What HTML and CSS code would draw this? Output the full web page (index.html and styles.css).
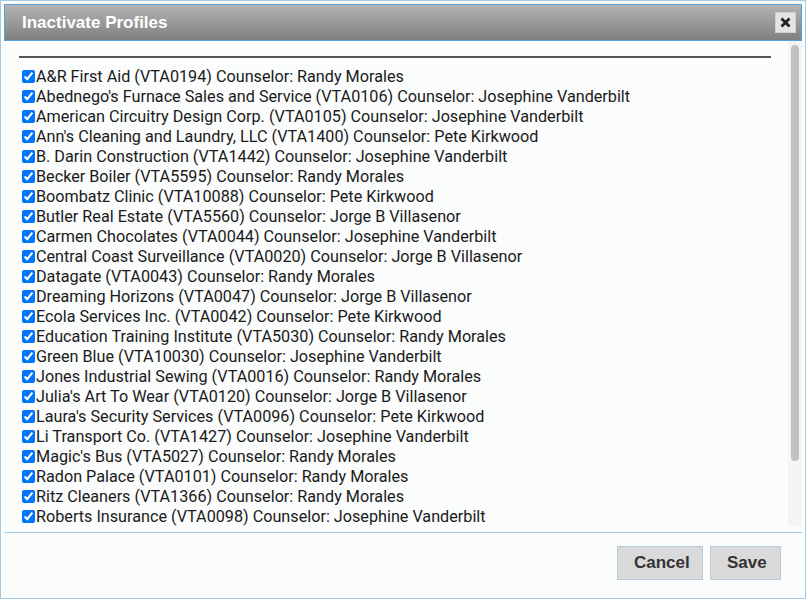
FILE: index.html
```html
<!DOCTYPE html>
<html lang="en">
<head>
  <meta charset="UTF-8">
  <title>Inactivate Profiles</title>
  <link rel="stylesheet" href="styles.css">
</head>
<body>
  <div class="dialog">
    <div class="titlebar">
      <span class="title">Inactivate Profiles</span>
      <button class="close" title="Close">
        <svg width="11" height="11" viewBox="0 0 11 11"><path d="M1.5 1.5 L9.5 9.5 M9.5 1.5 L1.5 9.5" stroke="#222" stroke-width="2.8"/></svg>
      </button>
    </div>

    <div class="content">
      <div class="list">
        <hr class="rule">
        <label class="row"><input type="checkbox" checked>A&amp;R First Aid (VTA0194) Counselor: Randy Morales</label>
        <label class="row"><input type="checkbox" checked>Abednego's Furnace Sales and Service (VTA0106) Counselor: Josephine Vanderbilt</label>
        <label class="row"><input type="checkbox" checked>American Circuitry Design Corp. (VTA0105) Counselor: Josephine Vanderbilt</label>
        <label class="row"><input type="checkbox" checked>Ann's Cleaning and Laundry, LLC (VTA1400) Counselor: Pete Kirkwood</label>
        <label class="row"><input type="checkbox" checked>B. Darin Construction (VTA1442) Counselor: Josephine Vanderbilt</label>
        <label class="row"><input type="checkbox" checked>Becker Boiler (VTA5595) Counselor: Randy Morales</label>
        <label class="row"><input type="checkbox" checked>Boombatz Clinic (VTA10088) Counselor: Pete Kirkwood</label>
        <label class="row"><input type="checkbox" checked>Butler Real Estate (VTA5560) Counselor: Jorge B Villasenor</label>
        <label class="row"><input type="checkbox" checked>Carmen Chocolates (VTA0044) Counselor: Josephine Vanderbilt</label>
        <label class="row"><input type="checkbox" checked>Central Coast Surveillance (VTA0020) Counselor: Jorge B Villasenor</label>
        <label class="row"><input type="checkbox" checked>Datagate (VTA0043) Counselor: Randy Morales</label>
        <label class="row"><input type="checkbox" checked>Dreaming Horizons (VTA0047) Counselor: Jorge B Villasenor</label>
        <label class="row"><input type="checkbox" checked>Ecola Services Inc. (VTA0042) Counselor: Pete Kirkwood</label>
        <label class="row"><input type="checkbox" checked>Education Training Institute (VTA5030) Counselor: Randy Morales</label>
        <label class="row"><input type="checkbox" checked>Green Blue (VTA10030) Counselor: Josephine Vanderbilt</label>
        <label class="row"><input type="checkbox" checked>Jones Industrial Sewing (VTA0016) Counselor: Randy Morales</label>
        <label class="row"><input type="checkbox" checked>Julia's Art To Wear (VTA0120) Counselor: Jorge B Villasenor</label>
        <label class="row"><input type="checkbox" checked>Laura's Security Services (VTA0096) Counselor: Pete Kirkwood</label>
        <label class="row"><input type="checkbox" checked>Li Transport Co. (VTA1427) Counselor: Josephine Vanderbilt</label>
        <label class="row"><input type="checkbox" checked>Magic's Bus (VTA5027) Counselor: Randy Morales</label>
        <label class="row"><input type="checkbox" checked>Radon Palace (VTA0101) Counselor: Randy Morales</label>
        <label class="row"><input type="checkbox" checked>Ritz Cleaners (VTA1366) Counselor: Randy Morales</label>
        <label class="row"><input type="checkbox" checked>Roberts Insurance (VTA0098) Counselor: Josephine Vanderbilt</label>
      </div>
      <div class="scrollbar"><div class="thumb"></div></div>
    </div>

    <div class="buttonpane">
      <button class="btn">Cancel</button>
      <button class="btn">Save</button>
    </div>
  </div>
</body>
</html>
```

FILE: styles.css
```css
html, body {
  margin: 0;
  padding: 0;
  background-color: #ffffff;
}
body {
  width: 808px;
  height: 600px;
  overflow: hidden;
}
.dialog {
  box-sizing: border-box;
  width: 806px;
  height: 599px;
  border: 1px solid #a6c9e2;
  background-color: #fbfcfc;
  padding: 3px;
  display: flex;
  flex-direction: column;
}
.titlebar {
  box-sizing: border-box;
  height: 37px;
  flex: none;
  border: 1px solid #5a9fd8;
  background: linear-gradient(#b4b4b4, #7f7f7f);
  display: flex;
  align-items: center;
  justify-content: space-between;
  padding: 0 5px 0 17px;
}
.title {
  color: #ffffff;
  font-family: "Liberation Sans", Arial, sans-serif;
  font-weight: bold;
  font-size: 17px;
}
.close {
  width: 21px;
  height: 21px;
  padding: 0;
  border: 1px solid #c5d3e0;
  background-color: #e4e4e4;
  display: flex;
  align-items: center;
  justify-content: center;
}
.content {
  flex: 1;
  display: flex;
  min-height: 0;
}
.list {
  flex: 1;
  padding: 0 17px 0 15px;
  font-family: Roboto, "Noto Sans", sans-serif;
  font-size: 16.2px;
  color: #1a1a1a;
  overflow: hidden;
}
.rule {
  margin: 15px 0 8px 0;
  border: 0;
  border-top: 2px solid #555555;
}
.row {
  display: flex;
  align-items: center;
  height: 20px;
  white-space: nowrap;
}
.row input {
  width: 13px;
  height: 13px;
  margin: 1px 1px 0 3px;
}
.scrollbar {
  width: 14px;
  margin: 0 0 6px 0;
  background-color: #f4f4f4;
  padding: 4px 0 0 0;
  display: flex;
  justify-content: center;
}
.thumb {
  width: 8px;
  height: 416px;
  border-radius: 4px;
  background-color: #c1c1c1;
}
.buttonpane {
  box-sizing: border-box;
  height: 63px;
  flex: none;
  border-top: 1px solid #a6c9e2;
  display: flex;
  justify-content: flex-end;
  align-items: flex-start;
  gap: 7px;
  padding: 13px 21px 0 0;
}
.btn {
  height: 34px;
  padding: 0 16px;
  border: 1px solid #b7cbdc;
  background-color: #dadada;
  color: #333333;
  font-family: "Liberation Sans", Arial, sans-serif;
  font-weight: bold;
  font-size: 17px;
}
.btn:first-child {
  width: 86px;
}
.btn:last-child {
  width: 71px;
}
```
